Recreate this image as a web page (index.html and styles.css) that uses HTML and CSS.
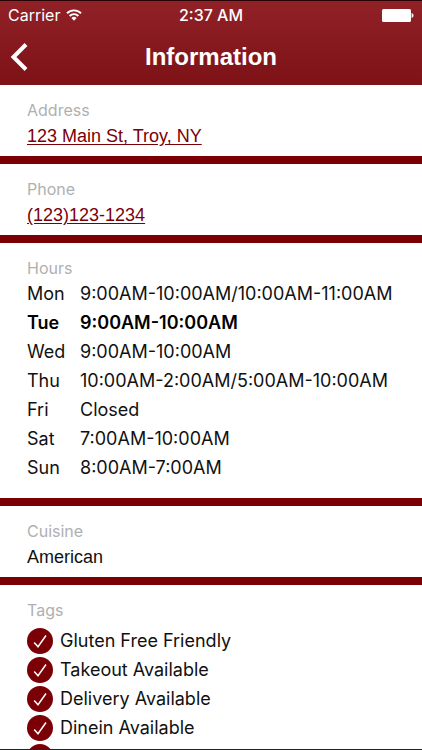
FILE: index.html
```html
<!DOCTYPE html>
<html lang="en-US">
  <head>
    <meta charset="UTF-8">
    <meta name="viewport" content="width=device-width, initial-scale=1">
    <title>Information</title>
    <link rel="stylesheet" href="styles.css">
  </head>
  <body>
    <header class="header">
      <div class="status-bar">
        <div class="carrier">
          <span>Carrier</span>
          <svg class="wifi" viewBox="0 0 16 12" width="16" height="12" aria-hidden="true">
            <path d="M1 4.2a10 10 0 0 1 14 0" fill="none" stroke="#fff" stroke-width="1.9"/>
            <path d="M3.6 7a6.2 6.2 0 0 1 8.8 0" fill="none" stroke="#fff" stroke-width="1.9"/>
            <path d="M8 11.8 5.4 9.1a3.7 3.7 0 0 1 5.2 0z" fill="#fff"/>
          </svg>
        </div>
        <time class="clock">2:37 AM</time>
        <svg class="battery" viewBox="0 0 32 13" width="32" height="13" aria-hidden="true">
          <rect x="0" y="0" width="29" height="13" rx="1.5" fill="#fff"/>
          <path d="M30 4.5a2.4 2.4 0 0 1 0 4z" fill="#fff" stroke="#fff" stroke-width="0.8"/>
        </svg>
      </div>
      <nav class="nav-bar">
        <button class="back" aria-label="Back">
          <svg viewBox="0 0 18 28" width="18" height="28" aria-hidden="true">
            <path d="M16 1.500 3.500 14 16 26.500" fill="none" stroke="#fff" stroke-width="4"/>
          </svg>
        </button>
        <h1>Information</h1>
      </nav>
    </header>
    <main class="content">
      <section>
        <h2>Address</h2>
        <a class="value" href="#">123 Main St, Troy, NY</a>
      </section>
      <section>
        <h2>Phone</h2>
        <a class="value" href="tel:1231231234">(123)123-1234</a>
      </section>
      <section class="hours">
        <h2>Hours</h2>
        <table>
          <tr><th scope="row">Mon</th><td>9:00AM-10:00AM/10:00AM-11:00AM</td></tr>
          <tr class="today"><th scope="row">Tue</th><td>9:00AM-10:00AM</td></tr>
          <tr><th scope="row">Wed</th><td>9:00AM-10:00AM</td></tr>
          <tr><th scope="row">Thu</th><td>10:00AM-2:00AM/5:00AM-10:00AM</td></tr>
          <tr><th scope="row">Fri</th><td>Closed</td></tr>
          <tr><th scope="row">Sat</th><td>7:00AM-10:00AM</td></tr>
          <tr><th scope="row">Sun</th><td>8:00AM-7:00AM</td></tr>
        </table>
      </section>
      <section>
        <h2>Cuisine</h2>
        <p class="value">American</p>
      </section>
      <section>
        <h2>Tags</h2>
        <ul class="tags">
          <li><svg class="check" viewBox="0 0 26 26" aria-hidden="true"><circle cx="13" cy="13" r="13"/><path d="M7.200 14.500 11 18.700 19 7.500"/></svg>Gluten Free Friendly</li>
          <li><svg class="check" viewBox="0 0 26 26" aria-hidden="true"><circle cx="13" cy="13" r="13"/><path d="M7.200 14.500 11 18.700 19 7.500"/></svg>Takeout Available</li>
          <li><svg class="check" viewBox="0 0 26 26" aria-hidden="true"><circle cx="13" cy="13" r="13"/><path d="M7.200 14.500 11 18.700 19 7.500"/></svg>Delivery Available</li>
          <li><svg class="check" viewBox="0 0 26 26" aria-hidden="true"><circle cx="13" cy="13" r="13"/><path d="M7.200 14.500 11 18.700 19 7.500"/></svg>Dinein Available</li>
          <li><svg class="check" viewBox="0 0 26 26" aria-hidden="true"><circle cx="13" cy="13" r="13"/><path d="M7.200 14.500 11 18.700 19 7.500"/></svg></li>
        </ul>
      </section>
    </main>
  </body>
</html>
```

FILE: styles.css
```css
* {
  box-sizing: border-box;
}
body {
  margin: 0;
  height: 100vh;
  display: flex;
  flex-direction: column;
  overflow: hidden;
  background: white;
  color: #111;
  font-family: Inter, sans-serif;
  font-size: 18px;
  border-bottom: 1px solid #222;
}
.header {
  flex: none;
  background: linear-gradient(#902127, #7d1217);
  border-top: 1px solid #2a0306;
  color: white;
}
.status-bar {
  display: grid;
  grid-template-columns: 1fr auto 1fr;
  align-items: center;
  height: 28px;
  padding: 0 8px;
  font-size: 16px;
}
.carrier {
  display: flex;
  align-items: center;
  gap: 6px;
}
.clock {
  font-weight: 500;
}
.battery {
  justify-self: end;
}
.nav-bar {
  display: grid;
  grid-template-columns: 1fr auto 1fr;
  align-items: center;
  height: 56px;
  padding: 0 10px;
}
.back {
  display: flex;
  justify-self: start;
  padding: 0;
  border: none;
  background: none;
  cursor: pointer;
}
h1 {
  margin: 0;
  font-family: "Liberation Sans", Arial, sans-serif;
  font-size: 24px;
  font-weight: bold;
}
.content {
  flex: 1;
  min-height: 0;
  overflow: hidden;
}
section {
  padding: 14px 27px 4px;
  border-bottom: 8px solid #7b0006;
}
h2 {
  margin: 0;
  color: #b0b0b0;
  font-size: 16px;
  font-weight: normal;
  line-height: 22px;
}
.value {
  display: block;
  margin: 0;
  font-family: "Liberation Sans", Arial, sans-serif;
  line-height: 31px;
}
a.value {
  color: #7b0006;
  text-decoration: underline;
  text-underline-offset: 2px;
}
.hours {
  padding-bottom: 16px;
}
table {
  border-collapse: collapse;
}
th,
td {
  padding: 0;
  line-height: 29px;
  text-align: left;
  font-weight: normal;
  white-space: nowrap;
}
th {
  min-width: 53px;
}
.today th,
.today td {
  color: black;
  font-weight: 600;
}
.tags {
  margin: 5px 0 0;
  padding: 0;
  list-style: none;
}
.tags li {
  display: flex;
  align-items: center;
  gap: 7px;
  height: 29px;
}
.check {
  width: 26px;
  height: 26px;
}
.check circle {
  fill: #7b0006;
}
.check path {
  fill: none;
  stroke: white;
  stroke-width: 1.5;
}
```
